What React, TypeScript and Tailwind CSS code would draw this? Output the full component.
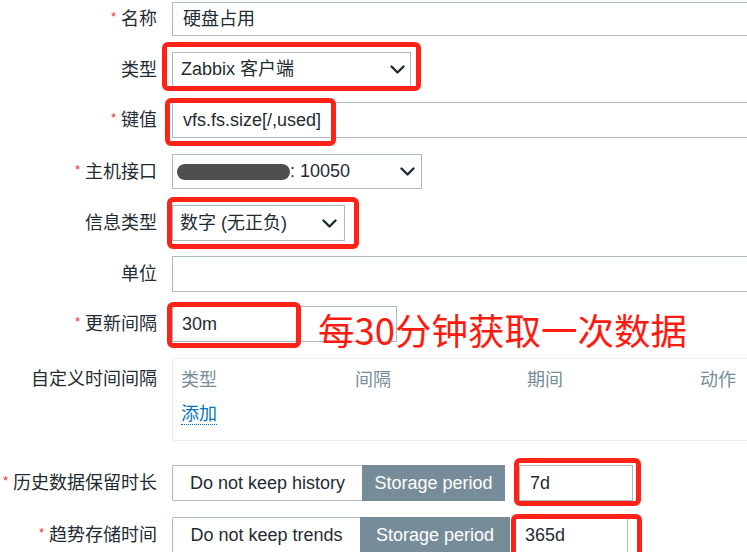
import type { ReactNode } from 'react';

const font = { fontFamily: '"Liberation Sans", "Noto Sans CJK SC", sans-serif' };

function Chevron() {
  return (
    <svg width="15" height="9" viewBox="0 0 15 9" className="shrink-0">
      <polyline points="1.5,1.5 7.5,7.5 13.5,1.5" fill="none" stroke="#1f2c33" strokeWidth="2.4" strokeLinecap="round" strokeLinejoin="round" />
    </svg>
  );
}

function Label({ text, required, top }: { text: string; required?: boolean; top?: boolean }) {
  return (
    <div className={`w-[157px] shrink-0 text-right text-[18px] leading-none text-[#1f2c33] ${top ? 'pt-[12px]' : ''}`}>
      {required && <span className="relative -top-[4px] mr-[5px] text-[13px] text-[#e33734]">*</span>}
      {text}
    </div>
  );
}

function Row({ label, required, top, className, children }: { label: string; required?: boolean; top?: boolean; className: string; children: ReactNode }) {
  return (
    <div className={`flex ${top ? 'items-start' : 'items-center'} ${className}`}>
      <Label text={label} required={required} top={top} />
      <div className="ml-[15px] flex min-w-0 flex-1 items-center">{children}</div>
    </div>
  );
}

function Mark({ className }: { className: string }) {
  return <div className={`pointer-events-none absolute rounded-[6px] border-[5px] border-[#ff2317] ${className}`} />;
}

export default function App() {
  return (
    <div className="h-[552px] w-[747px] overflow-hidden bg-white text-[#1f2c33]" style={font}>
      <div className="relative">
        <Row label="名称" required className="mt-[2px]">
          <div className="flex h-[34px] w-[600px] shrink-0 items-center border border-[#acbbc2] pl-[10px] text-[18px]">硬盘占用</div>
        </Row>

        <Row label="类型" className="mt-[16px]">
          <div className="relative flex h-[35px] w-[239px] items-center justify-between border border-[#acbbc2] pl-[8px] pr-[5px] text-[18px]">
            <span>Zabbix 客户端</span>
            <Chevron />
            <Mark className="-left-[11px] -top-[11px] -right-[11px] -bottom-[5px]" />
          </div>
        </Row>

        <Row label="键值" required className="mt-[15px]">
          <div className="relative flex h-[36px] w-[600px] shrink-0 items-center border border-[#acbbc2] pl-[10px] text-[18px]">
            vfs.fs.size[/,used]
            <Mark className="-left-[8px] -top-[5px] w-[171px] -bottom-[9px]" />
          </div>
        </Row>

        <Row label="主机接口" required className="mt-[16px]">
          <div className="flex h-[35px] w-[250px] items-center border border-[#acbbc2] pl-[4px] pr-[6px] text-[18px]">
            <span className="h-[16px] w-[113px] rounded-full bg-[#4f4f4f]" />
            <span className="flex-1">: 10050</span>
            <Chevron />
          </div>
        </Row>

        <Row label="信息类型" className="mt-[16px]">
          <div className="relative flex h-[36px] w-[173px] items-center justify-between border border-[#acbbc2] pl-[7px] pr-[7px] text-[18px]">
            <span>数字 (无正负)</span>
            <Chevron />
            <Mark className="-left-[6px] -top-[9px] -right-[15px] -bottom-[9px]" />
          </div>
        </Row>

        <Row label="单位" className="mt-[15px]">
          <div className="h-[36px] w-[600px] shrink-0 border border-[#acbbc2]" />
        </Row>

        <Row label="更新间隔" required className="mt-[14px]">
          <div className="relative flex h-[36px] w-[225px] items-center border border-[#acbbc2] pl-[9px] text-[18px]">
            30m
            <Mark className="-left-[6px] -top-[5px] w-[134px] -bottom-[7px]" />
          </div>
        </Row>

        <Row label="自定义时间间隔" top className="mt-[16px]">
          <div className="h-[83px] w-[600px] shrink-0 border border-[#ebeef0] pl-[8px] pt-[10px] text-[18px]">
            <div className="flex leading-[22px] text-[#768d99]">
              <span className="w-[174px]">类型</span>
              <span className="w-[172px]">间隔</span>
              <span className="w-[173px]">期间</span>
              <span>动作</span>
            </div>
            <div className="mt-[12px] leading-[22px]">
              <span className="border-b border-dotted border-[#0275b8] text-[#0275b8]">添加</span>
            </div>
          </div>
        </Row>

        <Row label="历史数据保留时长" required className="mt-[24px]">
          <div className="flex h-[36px] items-stretch text-[18px]">
            <div className="flex w-[190px] items-center justify-center rounded-l-[2px] border border-r-0 border-[#acbbc2]">Do not keep history</div>
            <div className="flex w-[143px] items-center justify-center bg-[#768d99] text-white">Storage period</div>
          </div>
          <div className="relative ml-[14px] flex h-[36px] w-[114px] items-center border border-[#acbbc2] pl-[10px] text-[18px]">
            7d
            <Mark className="-left-[6px] -top-[8px] -right-[9px] -bottom-[6px]" />
          </div>
        </Row>

        <Row label="趋势存储时间" required className="mt-[16px]">
          <div className="flex h-[36px] items-stretch text-[18px]">
            <div className="flex w-[188px] items-center justify-center rounded-l-[2px] border border-r-0 border-[#acbbc2]">Do not keep trends</div>
            <div className="flex w-[150px] items-center justify-center bg-[#768d99] text-white">Storage period</div>
          </div>
          <div className="relative ml-[4px] flex h-[36px] w-[114px] items-center border border-[#acbbc2] pl-[10px] text-[18px]">
            365d
            <Mark className="-left-[4px] -top-[4px] -right-[15px] -bottom-[6px]" />
          </div>
        </Row>

        <div className="pointer-events-none absolute left-[318px] top-[305px] whitespace-nowrap text-[36.5px] leading-[46px] text-[#ff1a0f]" style={{ fontFamily: '"Noto Sans CJK SC", sans-serif' }}>
          每30分钟获取一次数据
        </div>
      </div>
    </div>
  );
}
